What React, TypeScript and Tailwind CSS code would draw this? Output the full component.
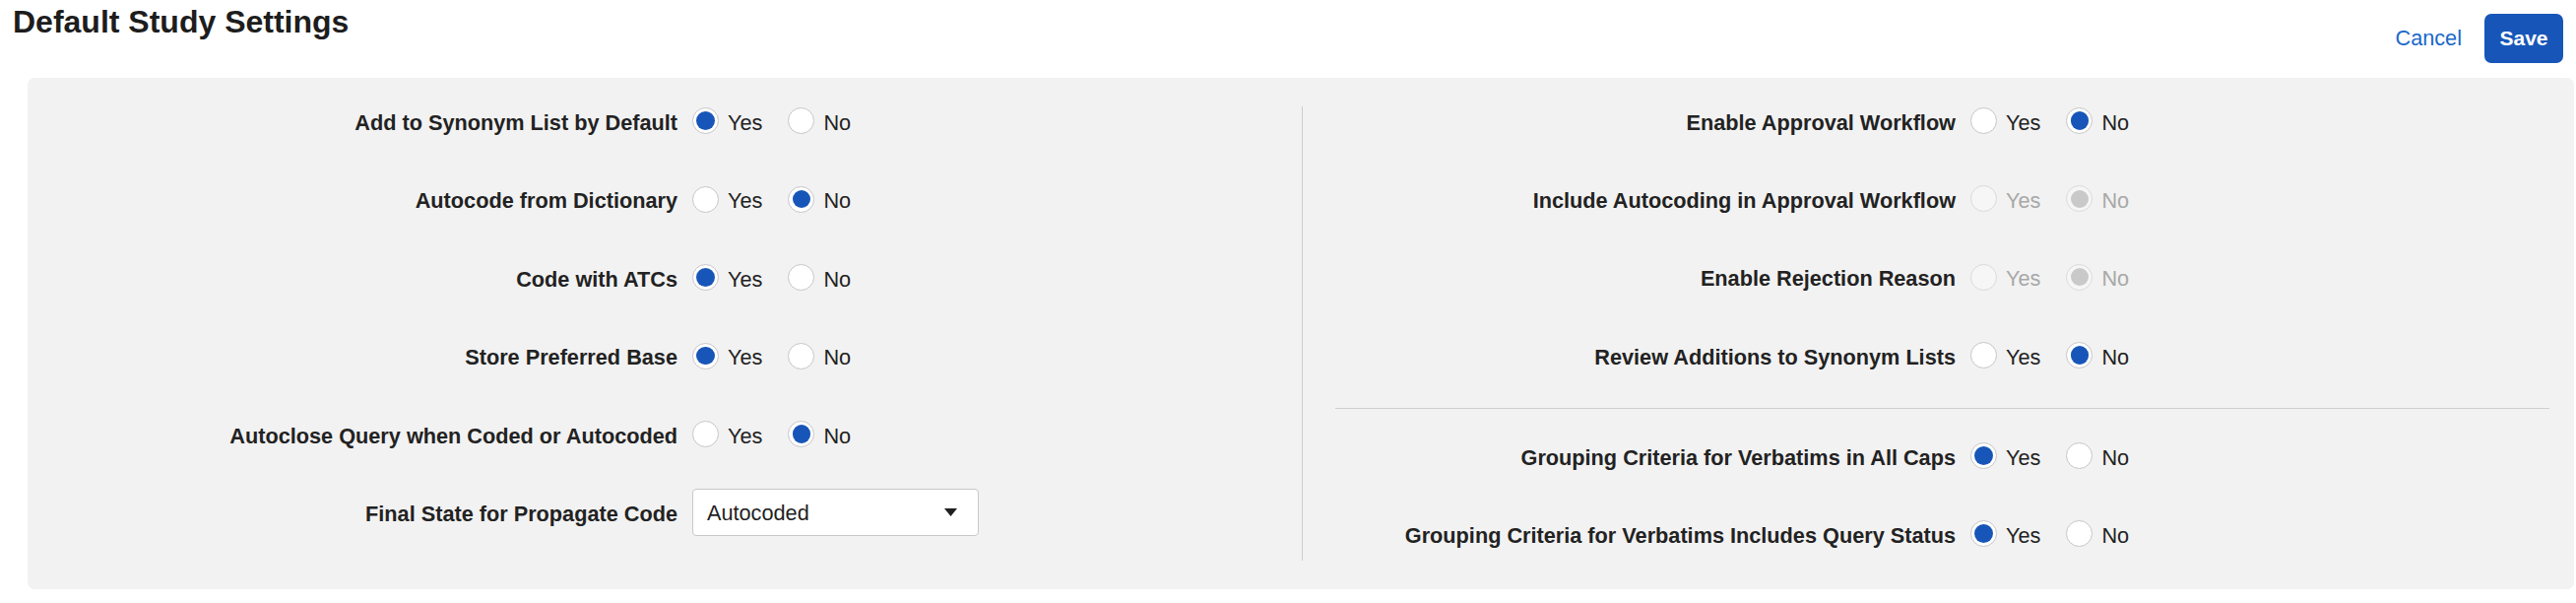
import React from "react";

type Opt = "yes" | "no";

function Radio({ checked, disabled }: { checked: boolean; disabled?: boolean }) {
  const ring = disabled
    ? "border-[#dadada] bg-[#f6f6f6]"
    : "border-[#c6c6c6] bg-white";
  const dot = disabled ? "bg-[#c9c9c9]" : "bg-[#1756b8]";
  return (
    <span
      className={`flex h-[27px] w-[27px] shrink-0 items-center justify-center rounded-full border ${ring}`}
    >
      {checked ? <span className={`h-[18.5px] w-[18.5px] rounded-full ${dot}`} /> : null}
    </span>
  );
}

function YesNo({ value, disabled }: { value: Opt; disabled?: boolean }) {
  const txt = disabled ? "text-[#a8a8a8]" : "text-[#222]";
  return (
    <div className="ml-[15px] flex items-center gap-[26px]">
      <div className="flex items-center">
        <Radio checked={value === "yes"} disabled={disabled} />
        <span className={`ml-[9px] pt-[5px] ${txt}`}>Yes</span>
      </div>
      <div className="flex items-center">
        <Radio checked={value === "no"} disabled={disabled} />
        <span className={`ml-[9px] pt-[5px] ${txt}`}>No</span>
      </div>
    </div>
  );
}

function Row({ label, children }: { label: string; children: React.ReactNode }) {
  return (
    <div className="flex h-[29px] items-center">
      <div className="w-[630px] shrink-0 pt-[5px] text-right font-bold text-[#222]">{label}</div>
      {children}
    </div>
  );
}

export default function App() {
  return (
    <div className="h-[612px] w-[2616px] bg-white font-['Liberation_Sans',Arial,sans-serif] text-[21.7px] text-[#222]">
      <header className="flex items-start justify-between pl-[13px] pr-[13px]">
        <h1 className="pt-[6px] text-[32px] font-bold leading-none text-[#1d1d1d]">
          Default Study Settings
        </h1>
        <div className="mt-[14px] flex items-center gap-[23px]">
          <span className="text-[21.7px] text-[#1a68c9]">Cancel</span>
          <button className="flex h-[50px] w-[80px] items-center justify-center rounded-[7px] bg-[#1756b8] text-[21px] font-bold text-white">
            Save
          </button>
        </div>
      </header>

      <section className="ml-[28px] mt-[15px] flex w-[2586px] rounded-[7px] bg-[#f2f2f2] pb-[29px] pl-[30px] pr-[25px] pt-[29px]">
        <div className="flex w-[1264px] shrink-0 flex-col gap-[50.5px] pb-[34.5px]">
          <Row label="Add to Synonym List by Default">
            <YesNo value="yes" />
          </Row>
          <Row label="Autocode from Dictionary">
            <YesNo value="no" />
          </Row>
          <Row label="Code with ATCs">
            <YesNo value="yes" />
          </Row>
          <Row label="Store Preferred Base">
            <YesNo value="yes" />
          </Row>
          <Row label="Autoclose Query when Coded or Autocoded">
            <YesNo value="no" />
          </Row>
          <Row label="Final State for Propagate Code">
            <div className="ml-[15px] flex h-[48px] w-[291px] shrink-0 items-center justify-between rounded-[4px] border border-[#c8c8c8] bg-white pl-[14px] pr-[21px]">
              <span className="pt-[2px] text-[#1f1f1f]">Autocoded</span>
              <svg width="13" height="8" viewBox="0 0 13 8" aria-hidden="true">
                <path d="M0 0 L13 0 L6.5 8 Z" fill="#1f1f1f" />
              </svg>
            </div>
          </Row>
        </div>

        <div className="flex flex-1 flex-col border-l border-[#cdcdcd] pl-[33px]">
          <div className="flex flex-col gap-[50.3px]">
            <Row label="Enable Approval Workflow">
              <YesNo value="no" />
            </Row>
            <Row label="Include Autocoding in Approval Workflow">
              <YesNo value="no" disabled />
            </Row>
            <Row label="Enable Rejection Reason">
              <YesNo value="no" disabled />
            </Row>
            <Row label="Review Additions to Synonym Lists">
              <YesNo value="no" />
            </Row>
          </div>
          <div className="mt-[39.5px] h-px bg-[#cfcfcf]" />
          <div className="mt-[32.5px] flex flex-col gap-[50px]">
            <Row label="Grouping Criteria for Verbatims in All Caps">
              <YesNo value="yes" />
            </Row>
            <Row label="Grouping Criteria for Verbatims Includes Query Status">
              <YesNo value="yes" />
            </Row>
          </div>
        </div>
      </section>
    </div>
  );
}
